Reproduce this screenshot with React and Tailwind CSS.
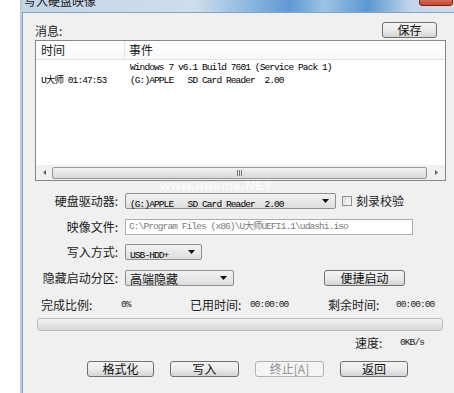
const cjk = "font-['Noto_Sans_CJK_SC','Noto_Sans',sans-serif]";
const mono = "font-['Liberation_Mono','Noto_Sans_CJK_SC',monospace] text-[9.5px] tracking-[-0.9px]";

function Button({ children, className = "", disabled = false }) {
  return (
    <div
      className={`flex items-center justify-center h-[16px] rounded-[3px] border ${
        disabled
          ? "border-[#adb2b5] text-[#8f8f8f] bg-[#f4f4f4]"
          : "border-[#707070] text-[#111] bg-linear-to-b from-[#f4f4f4] via-[#ebebeb] to-[#d4d4d4]"
      } text-[12px] leading-none ${cjk} ${className}`}
    >
      {children}
    </div>
  );
}

function Arrow() {
  return (
    <svg width="7" height="4" viewBox="0 0 7 4" className="shrink-0">
      <path d="M0 0h7L3.5 4z" fill="#111" />
    </svg>
  );
}

function Combo({ children, className = "" }) {
  return (
    <div
      className={`flex items-center h-[16px] pl-[4px] pr-[6px] rounded-[2px] border border-[#8e8f8f] bg-linear-to-b from-[#f3f3f3] to-[#dddddd] ${className}`}
    >
      <div className="flex-1 overflow-hidden whitespace-nowrap">{children}</div>
      <Arrow />
    </div>
  );
}

function FormRow({ label, children, className = "" }) {
  return (
    <div className={`flex items-center h-[16px] ${className}`}>
      <div className={`w-[83px] text-right text-[12px] text-[#1a1a1a] ${cjk}`}>{label}</div>
      <div className="ml-[7px] flex items-center">{children}</div>
    </div>
  );
}

export default function App() {
  return (
    <div className="w-[454px] h-[393px] overflow-hidden bg-white flex">
      <div className="w-[20px] shrink-0 bg-white" />
      <div className="flex-1 flex flex-col border-l-[2px] border-[#b8cbe0]">
        {/* title bar */}
        <div className="relative h-[12px] shrink-0 overflow-hidden bg-[linear-gradient(90deg,#c3d5e8_0%,#cfdeee_40%,#8fb9df_52%,#5e9ad2_62%,#9cc3e6_70%,#5b98d1_80%,#c2d6ea_90%,#cddcec_100%)]">
          <div className={`absolute left-[2px] top-[-8px] text-[12px] text-[#1a1a1a] ${cjk}`}>写入硬盘映像</div>
          <div className="absolute right-[1px] top-[-10px] w-[34px] h-[16px] rounded-[3px] border border-[#6b2a20] bg-linear-to-b from-[#e8a08f] to-[#c8452c]" />
        </div>
        {/* client */}
        <div className="relative flex-1 bg-[#f0f0f0] border-l border-t border-[#8c9eb2] pl-[12px] pr-[8px]">
          <div className="flex items-end justify-between pt-[9px] pr-[9px]">
            <div className={`text-[12px] leading-[14px] text-[#1a1a1a] ${cjk}`}>消息:</div>
            <Button className="w-[55px]">保存</Button>
          </div>

          {/* list box */}
          <div className="mt-[2px] h-[141px] border border-[#828790] bg-white flex flex-col">
            <div className={`flex h-[19px] items-center border-b border-[#e5e5e5] bg-linear-to-b from-white to-[#f7f8f9] text-[12px] text-[#1a1a1a] ${cjk}`}>
              <div className="w-[89px] h-full flex items-center pl-[5px] border-r border-[#e5e5e5]">时间</div>
              <div className="pl-[4px]">事件</div>
            </div>
            <div className="flex-1 flex pt-[1px]">
              <div className="w-[89px] pl-[5px] pt-[13px]">
                <div className={`${mono} leading-[13px] whitespace-nowrap`}>U大师 01:47:53</div>
              </div>
              <div className="pl-[5px]">
                <div className={`${mono} leading-[13px] whitespace-nowrap`}>Windows 7 v6.1 Build 7601 (Service Pack 1)</div>
                <div className={`${mono} leading-[13px] whitespace-pre`}>(G:)APPLE   SD Card Reader  2.00</div>
              </div>
            </div>
            {/* horizontal scrollbar */}
            <div className="h-[15px] flex items-center bg-[#f0f0f0]">
              <div className="w-[16px] flex justify-center">
                <svg width="3" height="5" viewBox="0 0 3 5"><path d="M3 0v5L0 2.5z" fill="#606060" /></svg>
              </div>
              <div className="flex-1 h-[12px] rounded-[2px] border border-[#979797] bg-linear-to-b from-[#f2f2f2] to-[#d9d9d9] flex items-center justify-center">
                <div className="flex gap-[1px]">
                  <div className="w-[1px] h-[6px] bg-[#777]" />
                  <div className="w-[1px] h-[6px] bg-[#777]" />
                  <div className="w-[1px] h-[6px] bg-[#777]" />
                </div>
              </div>
              <div className="w-[18px] flex justify-center">
                <svg width="3" height="5" viewBox="0 0 3 5"><path d="M0 0v5L3 2.5z" fill="#606060" /></svg>
              </div>
            </div>
          </div>

          {/* form */}
          <FormRow label="硬盘驱动器:" className="mt-[12px]">
            <Combo className="w-[211px]">
              <span className={`${mono} whitespace-pre`}>(G:)APPLE   SD Card Reader  2.00</span>
            </Combo>
            <div className="ml-[6px] w-[10px] h-[10px] border border-[#8f8f8f] bg-linear-to-br from-[#dcdcdc] to-[#fbfbfb]" />
            <span className={`ml-[4px] text-[12px] text-[#1a1a1a] ${cjk}`}>刻录校验</span>
          </FormRow>

          <FormRow label="映像文件:" className="mt-[10px]">
            <div className="w-[288px] h-[16px] flex items-center pl-[3px] border border-[#abadb3] bg-white">
              <span className={`${mono} text-[#7a7a7a] whitespace-nowrap`}>C:\Program Files (x86)\U大师UEFI1.1\udashi.iso</span>
            </div>
          </FormRow>

          <FormRow label="写入方式:" className="mt-[9px]">
            <Combo className="w-[77px]">
              <span className={`${mono}`}>USB-HDD+</span>
            </Combo>
          </FormRow>

          <FormRow label="隐藏启动分区:" className="mt-[10px]">
            <Combo className="w-[109px]">
              <span className={`text-[12px] leading-none text-[#111] ${cjk}`}>高端隐藏</span>
            </Combo>
            <Button className="ml-[90px] w-[81px]">便捷启动</Button>
          </FormRow>

          {/* stats */}
          <div className="mt-[12px] h-[14px] flex items-center pl-[6px] text-[#1a1a1a]">
            <div className={`w-[80px] text-[12px] ${cjk}`}>完成比例:</div>
            <div className={`w-[69px] ${mono}`}>0%</div>
            <div className={`w-[60px] text-[12px] ${cjk}`}>已用时间:</div>
            <div className={`w-[78px] ${mono}`}>00:00:00</div>
            <div className={`w-[68px] text-[12px] ${cjk}`}>剩余时间:</div>
            <div className={`${mono}`}>00:00:00</div>
          </div>

          <div className="mt-[6px] ml-[2px] w-[406px] h-[13px] rounded-[3px] border border-[#bcbcbc] bg-linear-to-b from-[#f3f3f3] via-[#e6e6e6] to-[#d6d6d6]" />

          <div className="mt-[5px] h-[14px] flex items-center pl-[320px] text-[#1a1a1a]">
            <div className={`w-[45px] text-[12px] ${cjk}`}>速度:</div>
            <div className={`${mono}`}>0KB/s</div>
          </div>

          <div className="mt-[11px] flex pl-[52px] gap-[16px]">
            <Button className="w-[67px]">格式化</Button>
            <Button className="w-[69px]">写入</Button>
            <Button className="w-[69px]" disabled>终止[A]</Button>
            <Button className="w-[68px]">返回</Button>
          </div>

          {/* watermark */}
          <div className="absolute left-[137px] top-[163px] text-[13px] font-bold text-white/70 font-['Liberation_Sans',sans-serif] tracking-[0.5px]">
            www.itdome.NET
          </div>
        </div>
      </div>
    </div>
  );
}
